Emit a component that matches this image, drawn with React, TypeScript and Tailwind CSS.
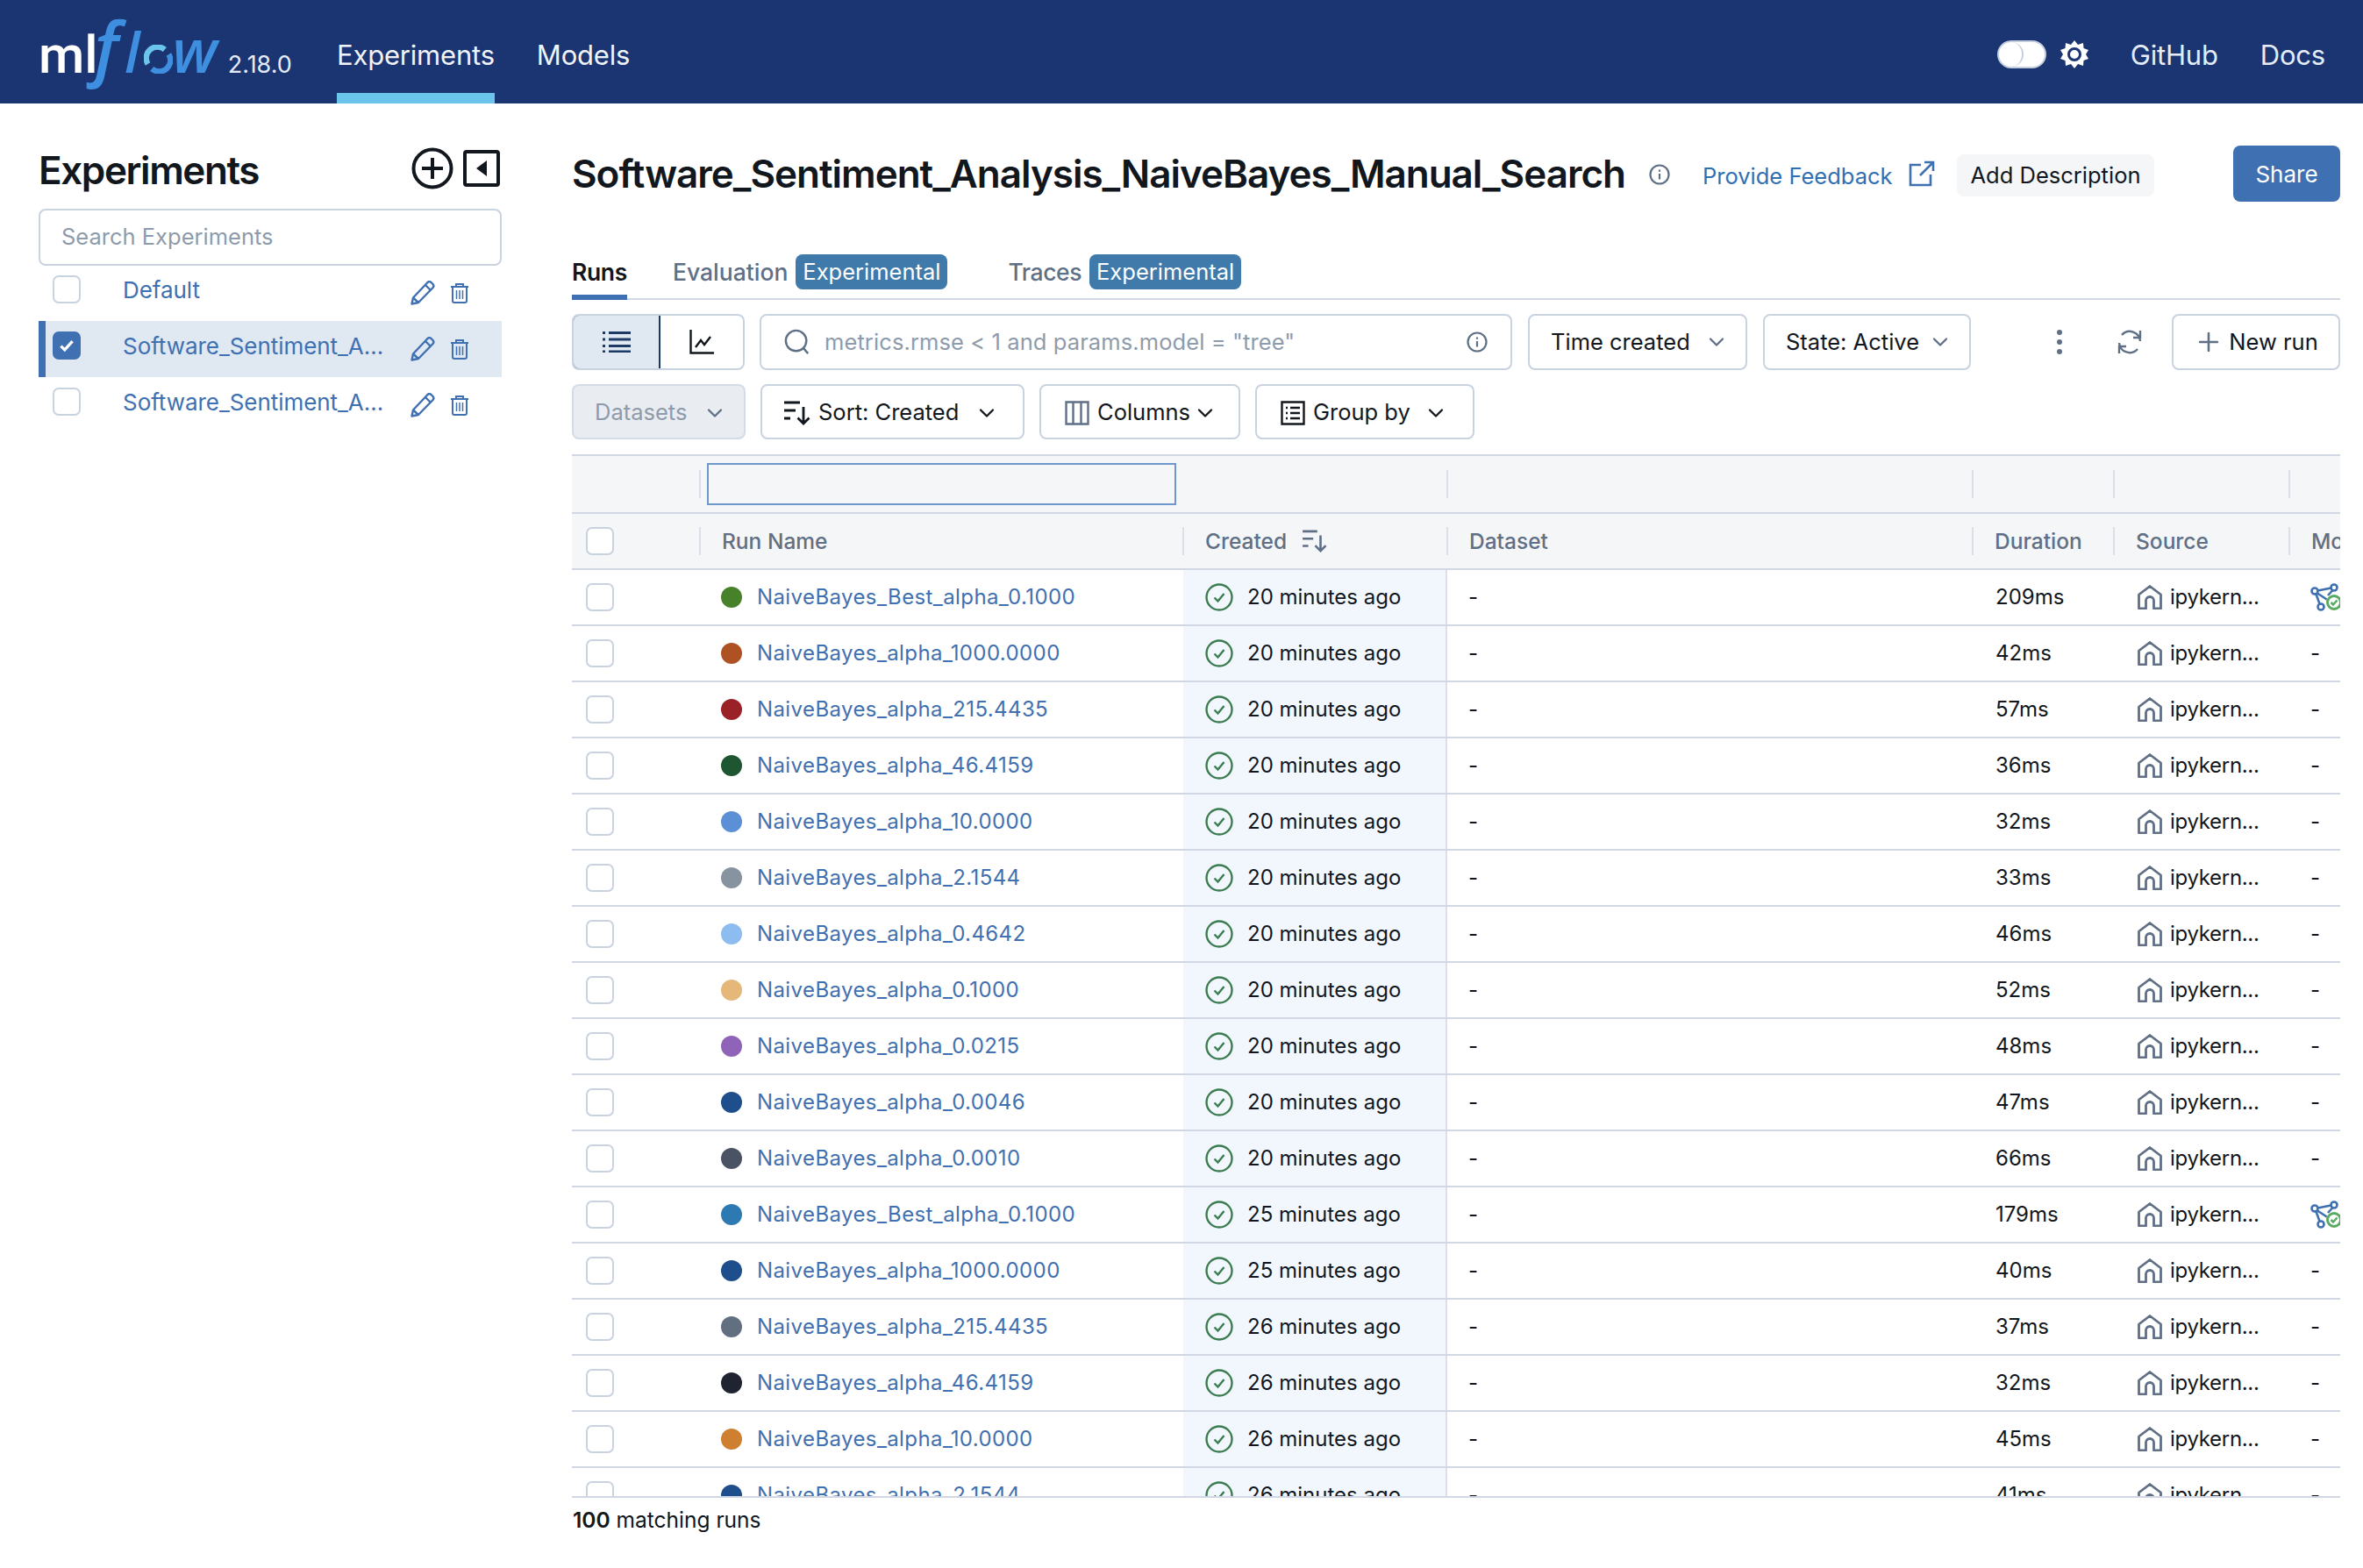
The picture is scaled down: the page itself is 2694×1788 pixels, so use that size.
import type { ReactNode } from "react";
import { ChevronDown, Plus } from "lucide-react";

const BORDER = "border-2 border-[#c9d3e0] rounded-[8px]";

const RUNS = [
  { name: "NaiveBayes_Best_alpha_0.1000", color: "bg-[#47822a]", ago: "20", dur: "209ms", model: true },
  { name: "NaiveBayes_alpha_1000.0000", color: "bg-[#ae5224]", ago: "20", dur: "42ms" },
  { name: "NaiveBayes_alpha_215.4435", color: "bg-[#9a2128]", ago: "20", dur: "57ms" },
  { name: "NaiveBayes_alpha_46.4159", color: "bg-[#1e5631]", ago: "20", dur: "36ms" },
  { name: "NaiveBayes_alpha_10.0000", color: "bg-[#5b8fd6]", ago: "20", dur: "32ms" },
  { name: "NaiveBayes_alpha_2.1544", color: "bg-[#8893a0]", ago: "20", dur: "33ms" },
  { name: "NaiveBayes_alpha_0.4642", color: "bg-[#8dbcf0]", ago: "20", dur: "46ms" },
  { name: "NaiveBayes_alpha_0.1000", color: "bg-[#e5b778]", ago: "20", dur: "52ms" },
  { name: "NaiveBayes_alpha_0.0215", color: "bg-[#8e63b8]", ago: "20", dur: "48ms" },
  { name: "NaiveBayes_alpha_0.0046", color: "bg-[#1f4e8c]", ago: "20", dur: "47ms" },
  { name: "NaiveBayes_alpha_0.0010", color: "bg-[#495363]", ago: "20", dur: "66ms" },
  { name: "NaiveBayes_Best_alpha_0.1000", color: "bg-[#2d7ab2]", ago: "25", dur: "179ms", model: true },
  { name: "NaiveBayes_alpha_1000.0000", color: "bg-[#1f4e8c]", ago: "25", dur: "40ms" },
  { name: "NaiveBayes_alpha_215.4435", color: "bg-[#626f80]", ago: "26", dur: "37ms" },
  { name: "NaiveBayes_alpha_46.4159", color: "bg-[#1f2430]", ago: "26", dur: "32ms" },
  { name: "NaiveBayes_alpha_10.0000", color: "bg-[#cf7f30]", ago: "26", dur: "45ms" },
  { name: "NaiveBayes_alpha_2.1544", color: "bg-[#1f4e8c]", ago: "26", dur: "41ms" },
];

function Logo() {
  return (
    <div className="flex w-[340px] flex-none items-baseline pb-[14px] tracking-normal">
      <span className="font-['Roboto',sans-serif] text-[60px] leading-none font-medium text-white">ml</span>
      <span className="-ml-[4px] font-['Open_Sans',sans-serif] text-[80px] leading-none font-semibold text-[#3f8fe0] italic">f</span>
      <span className="ml-[7px] font-['Open_Sans',sans-serif] text-[64px] leading-none font-semibold text-[#3f8fe0] italic">l</span>
      <svg viewBox="0 0 36 36" className="ml-[4px] h-[33px] w-[33px] translate-y-[1px]" fill="none" strokeWidth="7">
        <path d="M5 24A14 14 0 0 1 26 6" stroke="#6bc4ea" />
        <path d="M31 12A14 14 0 0 1 10 30" stroke="#3f8fe0" />
      </svg>
      <span className="font-['Open_Sans',sans-serif] text-[68px] leading-none font-semibold text-[#3f8fe0] italic">w</span>
      <span className="ml-[12px] text-[27px] leading-none text-[#e4ecf7]">2.18.0</span>
    </div>
  );
}

function SunIcon() {
  return (
    <svg viewBox="0 0 32 32" className="h-[32px] w-[32px]">
      <polygon
        fill="#fff"
        points="16,0 20,5 26,3 26.5,9 32,11 29,16 32,21 26.5,23 26,29 20,27 16,32 12,27 6,29 5.5,23 0,21 3,16 0,11 5.5,9 6,3 12,5"
      />
      <circle cx="16" cy="16" r="6.5" fill="#fff" stroke="#1b3573" strokeWidth="3" />
    </svg>
  );
}

function Header() {
  return (
    <header className="flex h-[118px] flex-none items-center bg-[#1b3573] pr-[43px] pl-[44px] text-[31px] tracking-[-0.2px] text-[#e4ecf7]">
      <Logo />
      <div className="flex h-full items-center border-t-[12px] border-b-[12px] border-t-transparent border-b-[#6bc4ea] pt-[8px] text-[#f0f4fa]">
        Experiments
      </div>
      <div className="ml-[48px] pt-[8px] text-[#f0f4fa]">Models</div>
      <div className="ml-auto flex items-center pt-[6px]">
        <div className="flex h-[32px] w-[56px] rounded-full border-2 border-[#c3cfdd] bg-white">
          <div className="h-full w-[28px] rounded-full border-r-2 border-[#c3cfdd]" />
        </div>
        <div className="ml-[16px]">
          <SunIcon />
        </div>
        <span className="ml-[48px] pt-[2px]">GitHub</span>
        <span className="ml-[48px] pt-[2px]">Docs</span>
      </div>
    </header>
  );
}

function Checkbox({ checked }: { checked?: boolean }) {
  return (
    <div
      className={`flex h-[32px] w-[32px] flex-none items-center justify-center rounded-[7px] border-2 ${
        checked ? "border-[#3f70b1] bg-[#3f70b1]" : "border-[#c9d3e0] bg-white"
      }`}
    >
      {checked && (
        <svg viewBox="0 0 20 20" className="h-[22px] w-[22px]" fill="none" stroke="#fff" strokeWidth="3">
          <path d="M4 10.5l4 4 8-9" />
        </svg>
      )}
    </div>
  );
}

function PencilIcon() {
  return (
    <svg viewBox="0 0 28 28" className="h-[28px] w-[28px]" fill="none" stroke="#3f70b1" strokeWidth="2.4" strokeLinejoin="round">
      <path d="M1.5 26.5l1.5-7L19.5 2a3 3 0 0 1 4 0l2 2a3 3 0 0 1 0 4L9 25z" />
      <path d="M17 5l6 6M3 19.5L9 25" />
    </svg>
  );
}

function TrashIcon() {
  return (
    <svg viewBox="0 0 22 24" className="h-[24px] w-[22px]" fill="none" stroke="#3f70b1" strokeWidth="2">
      <path d="M1 5h20M7 5V2h8v3M3 5v16a2 2 0 0 0 2 2h12a2 2 0 0 0 2-2V5" />
      <path d="M7.5 9v10M11 9v10M14.5 9v10" strokeWidth="1.5" />
    </svg>
  );
}

function ExperimentRow({ name, selected }: { name: string; selected?: boolean }) {
  return (
    <div
      className={`flex h-[64px] items-center border-l-[8px] pl-[8px] ${
        selected ? "border-[#3f70b1] bg-[#e0e8f2]" : "border-transparent"
      }`}
    >
      <div className="mb-[8px]">
        <Checkbox checked={selected} />
      </div>
      <div className="mb-[7px] ml-[48px] w-[300px] truncate text-[26px] tracking-[-0.05px] text-[#3f70b1]">{name}</div>
      <div className="ml-[28px]">
        <PencilIcon />
      </div>
      <div className="ml-[17px]">
        <TrashIcon />
      </div>
    </div>
  );
}

function Sidebar() {
  return (
    <aside className="w-[652px] flex-none pt-[50px] pl-[44px]">
      <div className="w-[528px]">
        <div className="flex h-[70px] items-start justify-between">
          <h1 className="text-[44px] leading-[52px] font-semibold tracking-[-1.4px] text-[#11171c]">Experiments</h1>
          <div className="mr-[2px] flex items-center gap-[11px]">
            <svg viewBox="0 0 48 48" className="h-[48px] w-[48px]" fill="none" stroke="#11171c" strokeWidth="4">
              <circle cx="24" cy="24" r="21.5" />
              <path d="M24 12v24M12 24h24" />
            </svg>
            <svg viewBox="0 0 42 42" className="h-[42px] w-[42px]" fill="none" stroke="#11171c" strokeWidth="4">
              <rect x="2" y="2" width="38" height="38" rx="2" />
              <path d="M27 12v18L15 21z" fill="#11171c" stroke="none" />
            </svg>
          </div>
        </div>
        <div className={`flex h-[65px] items-center px-[24px] text-[25.5px] text-[#8e9bab] ${BORDER}`}>Search Experiments</div>
        <div className="-mt-px">
          <ExperimentRow name="Default" />
          <ExperimentRow name="Software_Sentiment_Analysis_NaiveBayes_Manual_Search" selected />
          <ExperimentRow name="Software_Sentiment_Analysis_NaiveBayes_Search" />
        </div>
      </div>
    </aside>
  );
}

function InfoIcon() {
  return (
    <svg viewBox="0 0 24 24" className="h-[24px] w-[24px]" fill="none" stroke="#5f7086" strokeWidth="2.2">
      <circle cx="12" cy="12" r="10.5" />
      <path d="M12 11v6.5M12 6.500v2.200" />
    </svg>
  );
}

function TitleRow() {
  return (
    <div className="flex h-[64px] flex-none items-center whitespace-nowrap">
      <h2 className="text-[44px] leading-none font-semibold tracking-[-1px] text-[#11171c]">
        Software_Sentiment_Analysis_NaiveBayes_Manual_Search
      </h2>
      <div className="ml-[27px] pt-[2px]">
        <InfoIcon />
      </div>
      <span className="ml-[37px] pt-[6px] text-[25.500px] text-[#2f6fb2]">Provide Feedback</span>
      <svg viewBox="0 0 30 30" className="ml-[18px] h-[30px] w-[30px] flex-none" fill="none" stroke="#3f70b1" strokeWidth="2.6">
        <path d="M14 5H2v23h23V16M18 2h10v10M28 2L13 17" />
      </svg>
      <div className="mt-[4px] ml-[25px] flex h-[48px] flex-none items-center rounded-[8px] bg-[#f5f6f8] px-[16px] text-[25.500px] text-[#11171c]">
        Add Description
      </div>
      <div className="ml-auto flex h-[64px] w-[122px] flex-none items-center justify-center rounded-[8px] bg-[#3f70b1] text-[26px] text-white">
        Share
      </div>
    </div>
  );
}

function Badge() {
  return (
    <span className="ml-[9px] flex h-[40px] w-[173px] items-center justify-center rounded-[8px] bg-[#3f7aab] text-[25.500px] font-normal text-white">
      Experimental
    </span>
  );
}

function Tabs() {
  return (
    <div className="mt-[60px] flex h-[52px] flex-none border-b-2 border-[#d1d8e3] text-[26.500px] font-medium text-[#5f7086]">
      <div className="flex h-[52px] w-[63px] items-start justify-center border-b-[6px] border-[#3f70b1] pt-[1px] font-semibold tracking-[-0.3px] text-[#11171c]">
        Runs
      </div>
      <div className="ml-[52px] flex h-[40px] items-center">
        <span className="pt-[2px]">Evaluation</span>
        <Badge />
      </div>
      <div className="ml-[69px] flex h-[40px] items-center">
        <span className="pt-[2px] tracking-[-0.4px]">Traces</span>
        <Badge />
      </div>
    </div>
  );
}

function SelectButton({ label, width, chevronGap }: { label: string; width: string; chevronGap: string }) {
  return (
    <div className={`flex h-[64px] flex-none items-center pl-[24px] text-[25.500px] text-[#11171c] ${BORDER} ${width}`}>
      {label}
      <ChevronDown size={28} strokeWidth={2} className={`text-[#5f7086] ${chevronGap}`} />
    </div>
  );
}

function FirstToolbar() {
  return (
    <div className="mt-[16px] flex h-[64px] flex-none items-center text-[25.500px]">
      <div className={`flex h-full w-[197px] flex-none overflow-hidden ${BORDER}`}>
        <div className="-m-[2px] flex w-[101px] flex-none items-center justify-center rounded-l-[8px] border-2 border-[#1c3a63] bg-[#e0e8f2]">
          <svg viewBox="0 0 32 24" className="h-[24px] w-[32px]" fill="none" stroke="#1c3a63" strokeWidth="3">
            <path d="M7 1.500h25M7 9h25M7 16.500h25M7 23h25M0 1.500h3M0 9h3M0 16.500h3M0 23h3" />
          </svg>
        </div>
        <div className="flex flex-1 items-center justify-center pl-[2px]">
          <svg viewBox="0 0 28 28" className="h-[28px] w-[28px]" fill="none" stroke="#11171c" strokeWidth="2.4">
            <path d="M1.500 0v26.500H28M7 20l6-8 4 5 7-9" />
          </svg>
        </div>
      </div>
      <div className={`ml-[17px] flex h-full w-[858px] flex-none items-center pl-[26px] text-[#8e9bab] ${BORDER}`}>
        <svg viewBox="0 0 32 32" className="h-[30px] w-[30px]" fill="none" stroke="#5f7086" strokeWidth="2.6">
          <circle cx="14.5" cy="14.5" r="12.5" />
          <path d="M23.5 23.5L29 30" />
        </svg>
        <span className="ml-[16px] tracking-[0.1px]">metrics.rmse &lt; 1 and params.model = "tree"</span>
        <div className="mr-[26px] ml-auto">
          <InfoIcon />
        </div>
      </div>
      <div className="ml-[18px]">
        <SelectButton label="Time created" width="w-[250px]" chevronGap="ml-[16px]" />
      </div>
      <div className="ml-[18px]">
        <SelectButton label="State: Active" width="w-[237px]" chevronGap="ml-[10px]" />
      </div>
      <div className="ml-[98px] flex w-[6px] flex-col gap-[5px]">
        <div className="h-[6px] rounded-full bg-[#5f7086]" />
        <div className="h-[6px] rounded-full bg-[#5f7086]" />
        <div className="h-[6px] rounded-full bg-[#5f7086]" />
      </div>
      <svg viewBox="0 0 30 30" className="ml-[62px] h-[30px] w-[30px]" fill="none" stroke="#5f7086" strokeWidth="2.4">
        <path d="M27 14A12 12 0 0 0 6 7M3 16A12 12 0 0 0 24 23" />
        <path d="M27 2v8h-8M3 28v-8h8" />
      </svg>
      <div className={`ml-auto flex h-full w-[192px] flex-none items-center justify-center gap-[6px] text-[#11171c] ${BORDER}`}>
        <Plus size={34} strokeWidth={1.8} className="text-[#5f7086]" />
        New run
      </div>
    </div>
  );
}

function SortIcon({ className, color }: { className: string; color: string }) {
  return (
    <svg viewBox="0 0 30 28" className={className} fill="none" stroke={color} strokeWidth="2.8">
      <path d="M0 2h18M0 11h13M0 20h7M22 7v19M15.5 19.5L22 26l6.500-6.500" />
    </svg>
  );
}

function SecondToolbar() {
  return (
    <div className="mt-[16px] flex h-[63px] flex-none items-center gap-[17px] text-[25.500px] text-[#11171c]">
      <div className="flex h-full w-[198px] items-center rounded-[8px] border-2 border-[#d5dbe4] bg-[#e9ecf1] pt-[2px] pl-[24px] text-[#8e9bab]">
        Datasets
        <ChevronDown size={28} strokeWidth={2} className="ml-[18px] text-[#5f7086]" />
      </div>
      <div className={`flex h-full w-[301px] items-center pt-[2px] pl-[25px] ${BORDER}`}>
        <SortIcon className="h-[28px] w-[30px]" color="#11171c" />
        <span className="ml-[9px]">Sort: Created</span>
        <ChevronDown size={28} strokeWidth={2} className="ml-[18px]" />
      </div>
      <div className={`flex h-full w-[229px] items-center pt-[2px] pl-[27px] ${BORDER}`}>
        <svg viewBox="0 0 28 28" className="h-[28px] w-[28px]" fill="none" stroke="#5f7086" strokeWidth="2.4">
          <path d="M1.500 1.500h25v25h-25zM9.500 1.500v25M18.500 1.500v25" />
        </svg>
        <span className="ml-[9px]">Columns</span>
        <ChevronDown size={28} strokeWidth={2} className="ml-[3px]" />
      </div>
      <div className={`flex h-full w-[250px] items-center pt-[2px] pl-[27px] ${BORDER}`}>
        <svg viewBox="0 0 28 28" className="h-[28px] w-[28px]" fill="none" stroke="#11171c" strokeWidth="2.4">
          <path d="M1.500 1.500h25v25h-25zM11 8h11M11 14h11M11 20h11M6 8h2M6 14h2M6 20h2" />
        </svg>
        <span className="ml-[9px]">Group by</span>
        <ChevronDown size={28} strokeWidth={2} className="ml-[15px]" />
      </div>
    </div>
  );
}

function HeaderDivider({ children, width, pad = "pl-[24px]" }: { children?: ReactNode; width: string; pad?: string }) {
  return (
    <div className={`flex h-[32px] flex-none items-center border-l-2 border-[#dbe0e8] whitespace-nowrap ${pad} ${width}`}>{children}</div>
  );
}

function FilterRow() {
  return (
    <div className="flex h-[66px] flex-none items-center border-b-2 border-[#d1d8e3] bg-[#f5f6f8]">
      <div className="w-[145px] flex-none" />
      <HeaderDivider width="w-[551px]" pad="pl-[7px]">
        <div className="-my-[8px] h-[48px] w-[535px] flex-none border-2 border-[#6f97c9]" />
      </HeaderDivider>
      <div className="w-[301px] flex-none" />
      <HeaderDivider width="w-[599px]" />
      <HeaderDivider width="w-[161px]" />
      <HeaderDivider width="w-[200px]" />
      <HeaderDivider width="w-[59px]" />
    </div>
  );
}

function ColumnsRow() {
  return (
    <div className="flex h-[64px] flex-none items-center border-b-2 border-[#d1d8e3] bg-[#f5f6f8] text-[24.500px] font-medium text-[#5f7086]">
      <div className="w-[145px] flex-none pl-[16px]">
        <Checkbox />
      </div>
      <HeaderDivider width="w-[551px]">Run Name</HeaderDivider>
      <HeaderDivider width="w-[301px]">
        Created
        <SortIcon className="ml-[18px] h-[26px] w-[28px]" color="#5f7086" />
      </HeaderDivider>
      <HeaderDivider width="w-[599px]">Dataset</HeaderDivider>
      <HeaderDivider width="w-[161px]">Duration</HeaderDivider>
      <HeaderDivider width="w-[200px]">Source</HeaderDivider>
      <HeaderDivider width="w-[59px]">Models</HeaderDivider>
    </div>
  );
}

function ModelIcon() {
  return (
    <svg viewBox="0 0 36 32" className="h-[32px] w-[36px] flex-none" fill="none">
      <g stroke="#3f70b1" strokeWidth="2.600">
        <circle cx="5" cy="9" r="3.500" />
        <circle cx="27" cy="5" r="3.500" />
        <circle cx="12" cy="27" r="3.500" />
        <path d="M8.500 8.500L23.500 5.500M6.500 12.500L10.500 23.500M8 11.500L24 22" />
        <path d="M25 8.500L20 14" />
      </g>
      <circle cx="27" cy="22" r="9" fill="#fff" />
      <circle cx="27" cy="22" r="7.500" fill="#fff" stroke="#5aab62" strokeWidth="3" />
      <path d="M23.500 22l2.500 2.500 4.500-5" stroke="#5aab62" strokeWidth="2.500" />
    </svg>
  );
}

function RunRow({ run }: { run: (typeof RUNS)[number] }) {
  return (
    <div className="flex h-[64px] flex-none items-stretch border-b-2 border-[#d1d8e3] text-[24px] text-[#11171c]">
      <div className="flex w-[145px] flex-none items-center pl-[16px]">
        <Checkbox />
      </div>
      <div className="flex w-[552px] flex-none items-center pl-[25px]">
        <div className={`h-[24px] w-[24px] flex-none rounded-full ${run.color}`} />
        <span className="ml-[17px] tracking-[0.4px] text-[#3f70b1]">{run.name}</span>
      </div>
      <div className="flex w-[301px] flex-none items-center border-r-2 border-[#dbe0e8] bg-[#f2f6fd] pl-[25px]">
        <svg viewBox="0 0 32 32" className="h-[32px] w-[32px] flex-none" fill="none" stroke="#3c7d4f" strokeWidth="2.400">
          <circle cx="16" cy="16" r="14.500" />
          <path d="M10.500 16.500l4 4 7-8.500" />
        </svg>
        <span className="ml-[16px] whitespace-nowrap">{run.ago} minutes ago</span>
      </div>
      <div className="flex w-[599px] flex-none items-center pl-[24px]">-</div>
      <div className="flex w-[161px] flex-none items-center pl-[26px]">{run.dur}</div>
      <div className="flex w-[200px] flex-none items-center pl-[27px]">
        <svg viewBox="0 0 28 28" className="h-[28px] w-[28px] flex-none" fill="none" stroke="#5f7086" strokeWidth="2.800">
          <path d="M1.500 27V11L14 1.500 26.500 11V27H18.500V18a4.500 4.500 0 0 0-9 0V27z" strokeLinejoin="round" />
        </svg>
        <span className="ml-[9px] tracking-[-0.3px]">ipykern...</span>
      </div>
      <div className="flex min-w-0 flex-1 items-center overflow-hidden pl-[24px]">{run.model ? <ModelIcon /> : "-"}</div>
    </div>
  );
}

function RunsTable() {
  return (
    <div className="mt-[17px] flex flex-none flex-col overflow-hidden border-t-2 border-[#d1d8e3]">
      <FilterRow />
      <ColumnsRow />
      <div className="flex h-[1058px] flex-col overflow-hidden border-b-2 border-[#d1d8e3]">
        {RUNS.map((run, i) => (
          <RunRow key={i} run={run} />
        ))}
      </div>
    </div>
  );
}

export default function App() {
  return (
    <div className="flex h-[1788px] w-[2694px] flex-col overflow-hidden bg-white font-['Inter',sans-serif]">
      <Header />
      <div className="flex min-h-0 flex-1">
        <Sidebar />
        <main className="flex min-w-0 flex-1 flex-col pt-[48px] pr-[26px]">
          <TitleRow />
          <Tabs />
          <FirstToolbar />
          <SecondToolbar />
          <RunsTable />
          <div className="mt-[7px] pl-px text-[24.500px] text-[#11171c]">
            <span className="font-semibold">100</span> matching runs
          </div>
        </main>
      </div>
    </div>
  );
}
